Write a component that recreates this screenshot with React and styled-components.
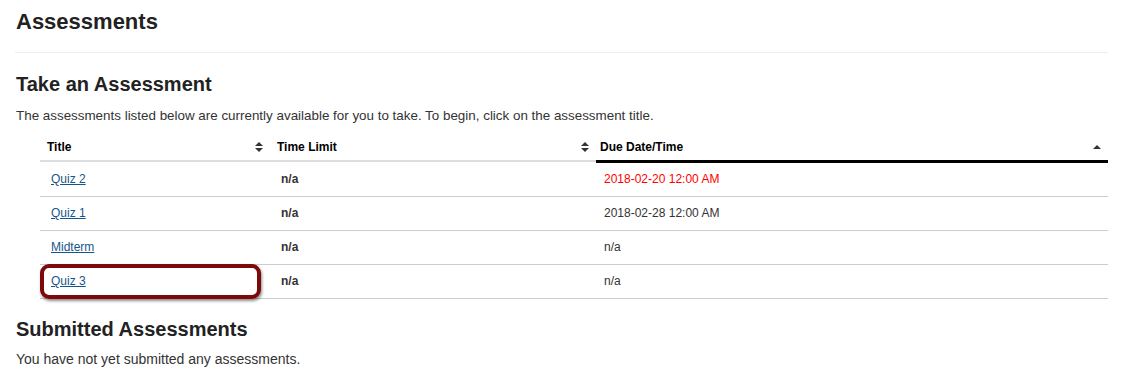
import React from 'react'
import styled, { createGlobalStyle } from 'styled-components'

const GlobalStyle = createGlobalStyle`
  html, body {
    margin: 0;
    padding: 0;
    background: #fff;
  }
  body {
    font-family: "Liberation Sans", Arial, sans-serif;
    color: #333;
  }
`

const Page = styled.div`
  padding: 0 17px 0 16px;
`

const Title = styled.h1`
  margin: 0;
  padding-top: 9px;
  font-size: 22px;
  line-height: 26px;
  font-weight: bold;
  color: #222;
`

const Divider = styled.hr`
  border: 0;
  border-top: 1px solid #eee;
  margin: 17px 0 0 -1px;
`

const SectionTitle = styled.h2`
  margin: 0;
  padding-top: ${p => p.$top}px;
  font-size: 20px;
  line-height: 24px;
  font-weight: bold;
  color: #222;
`

const Text = styled.p`
  margin: 0;
  padding-top: ${p => p.$top}px;
  font-size: ${p => p.$size}px;
  line-height: 16px;
  color: #333;
`

const Table = styled.table`
  margin: 10px 0 0 24px;
  width: calc(100% - 24px);
  border-collapse: collapse;
  table-layout: fixed;
`

const HeadCell = styled.th`
  box-sizing: border-box;
  width: ${p => p.$w || 'auto'};
  height: 27px;
  padding: 0 6px 0 ${p => p.$pl}px;
  text-align: left;
  vertical-align: middle;
  font-size: 12px;
  font-weight: bold;
  color: #000;
  border-bottom: ${p => (p.$active ? '3px solid #000' : '2px solid #ddd')};
`

const HeadInner = styled.div`
  display: flex;
  align-items: center;
  justify-content: space-between;
  padding-top: ${p => (p.$active ? 1 : 0)}px;
`

const SortIcon = styled.svg`
  flex: none;
  fill: #333;
`

const Row = styled.tr`
  border-bottom: 1px solid #ccc;
`

const Cell = styled.td`
  position: relative;
  height: 33px;
  padding: 0 8px 0 ${p => p.$pl}px;
  vertical-align: middle;
  font-size: 12px;
  font-weight: ${p => (p.$bold ? 'bold' : 'normal')};
  color: ${p => (p.$late ? '#ff0000' : '#333')};
`

const Link = styled.a`
  color: #15568a;
  text-decoration: underline;
  cursor: pointer;
`

const Highlight = styled.div`
  position: absolute;
  left: 0;
  top: -1px;
  width: 221px;
  height: 35px;
  box-sizing: border-box;
  border: 4px solid #7d0a0a;
  border-radius: 9px;
  box-shadow: 1px 2px 3px rgba(0, 0, 0, 0.45);
  pointer-events: none;
`

const BothArrows = () => (
  <SortIcon width="10" height="12" viewBox="0 0 10 12">
    <path d="M5 1 L9 5 H1 Z" />
    <path d="M1 7 H9 L5 11 Z" />
  </SortIcon>
)

const UpArrow = () => (
  <SortIcon width="10" height="12" viewBox="0 0 10 12">
    <path d="M5 4 L9 8 H1 Z" />
  </SortIcon>
)

const rows = [
  { title: 'Quiz 2', limit: 'n/a', due: '2018-02-20 12:00 AM', late: true },
  { title: 'Quiz 1', limit: 'n/a', due: '2018-02-28 12:00 AM' },
  { title: 'Midterm', limit: 'n/a', due: 'n/a' },
  { title: 'Quiz 3', limit: 'n/a', due: 'n/a', marked: true },
]

const App = () => (
  <>
    <GlobalStyle />
    <Page>
      <Title>Assessments</Title>
      <Divider />
      <SectionTitle $top={19}>Take an Assessment</SectionTitle>
      <Text $top={12} $size={13.4}>
        The assessments listed below are currently available for you to take. To begin, click on the assessment title.
      </Text>
      <Table>
        <thead>
          <tr>
            <HeadCell $w="230px" $pl={7}>
              <HeadInner>Title<BothArrows /></HeadInner>
            </HeadCell>
            <HeadCell $w="326px" $pl={7}>
              <HeadInner>Time Limit<BothArrows /></HeadInner>
            </HeadCell>
            <HeadCell $active $pl={4}>
              <HeadInner $active>Due Date/Time<UpArrow /></HeadInner>
            </HeadCell>
          </tr>
        </thead>
        <tbody>
          {rows.map(r => (
            <Row key={r.title}>
              <Cell $pl={11}>
                <Link>{r.title}</Link>
                {r.marked && <Highlight />}
              </Cell>
              <Cell $pl={11} $bold>{r.limit}</Cell>
              <Cell $pl={8} $late={r.late}>{r.due}</Cell>
            </Row>
          ))}
        </tbody>
      </Table>
      <SectionTitle $top={18}>Submitted Assessments</SectionTitle>
      <Text $top={10} $size={14}>You have not yet submitted any assessments.</Text>
    </Page>
  </>
)

export default App
